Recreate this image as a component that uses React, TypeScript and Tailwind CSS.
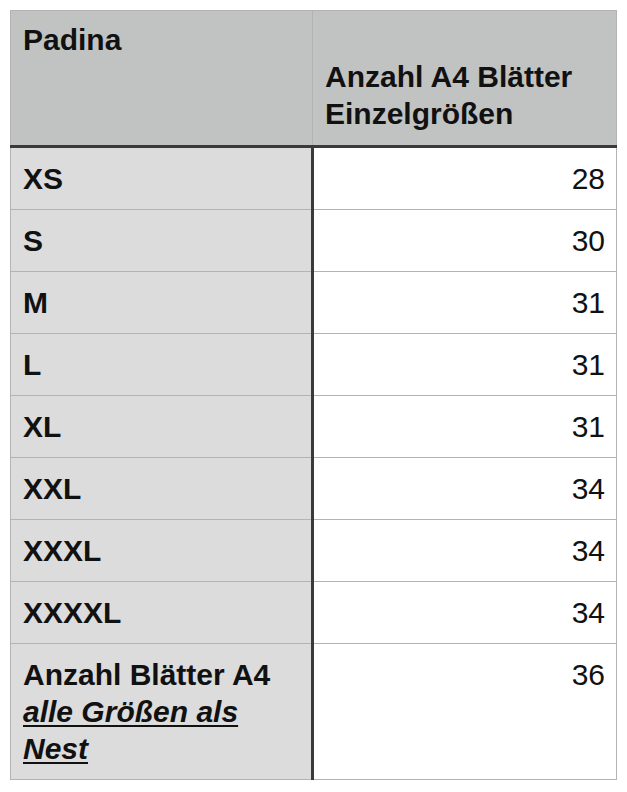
const rows = [
  { size: 'XS', count: 28 },
  { size: 'S', count: 30 },
  { size: 'M', count: 31 },
  { size: 'L', count: 31 },
  { size: 'XL', count: 31 },
  { size: 'XXL', count: 34 },
  { size: 'XXXL', count: 34 },
  { size: 'XXXXL', count: 34 },
];

export default function App() {
  return (
    <div className="min-h-screen bg-white pt-[10px] pl-[10px] font-['Liberation_Sans',Arial,sans-serif] text-[30px] leading-[37px] text-[#111]">
      <table className="w-[606px] table-fixed border-collapse">
        <colgroup>
          <col className="w-[302px]" />
          <col className="w-[304px]" />
        </colgroup>
        <thead>
          <tr className="bg-[#c1c3c2]">
            <th className="border border-[#b3b3b3] border-b-[3px] border-b-[#3a3a3a] px-[12px] pt-[10px] pb-[13px] text-left align-top font-bold">
              Padina
            </th>
            <th className="border border-[#b3b3b3] border-b-[3px] border-b-[#3a3a3a] px-[12px] pt-[10px] pb-[13px] text-left align-top font-bold">
              <div>&nbsp;</div>
              <div>Anzahl A4 Blätter</div>
              <div>Einzelgrößen</div>
            </th>
          </tr>
        </thead>
        <tbody>
          {rows.map((row) => (
            <tr key={row.size}>
              <td className="border border-[#b3b3b3] border-r-[3px] border-r-[#3a3a3a] bg-[#dcdcdc] px-[12px] py-[12px] align-top font-bold">
                {row.size}
              </td>
              <td className="border border-[#b3b3b3] bg-white px-[11px] py-[12px] text-right align-top">
                {row.count}
              </td>
            </tr>
          ))}
          <tr>
            <td className="border border-[#b3b3b3] border-r-[3px] border-r-[#3a3a3a] bg-[#dcdcdc] px-[12px] py-[12px] align-top font-bold">
              Anzahl Blätter A4
              <br />
              <span className="italic underline decoration-2 underline-offset-[3px]">
                alle Größen als Nest
              </span>
            </td>
            <td className="border border-[#b3b3b3] bg-white px-[11px] py-[12px] text-right align-top">
              36
            </td>
          </tr>
        </tbody>
      </table>
    </div>
  );
}
